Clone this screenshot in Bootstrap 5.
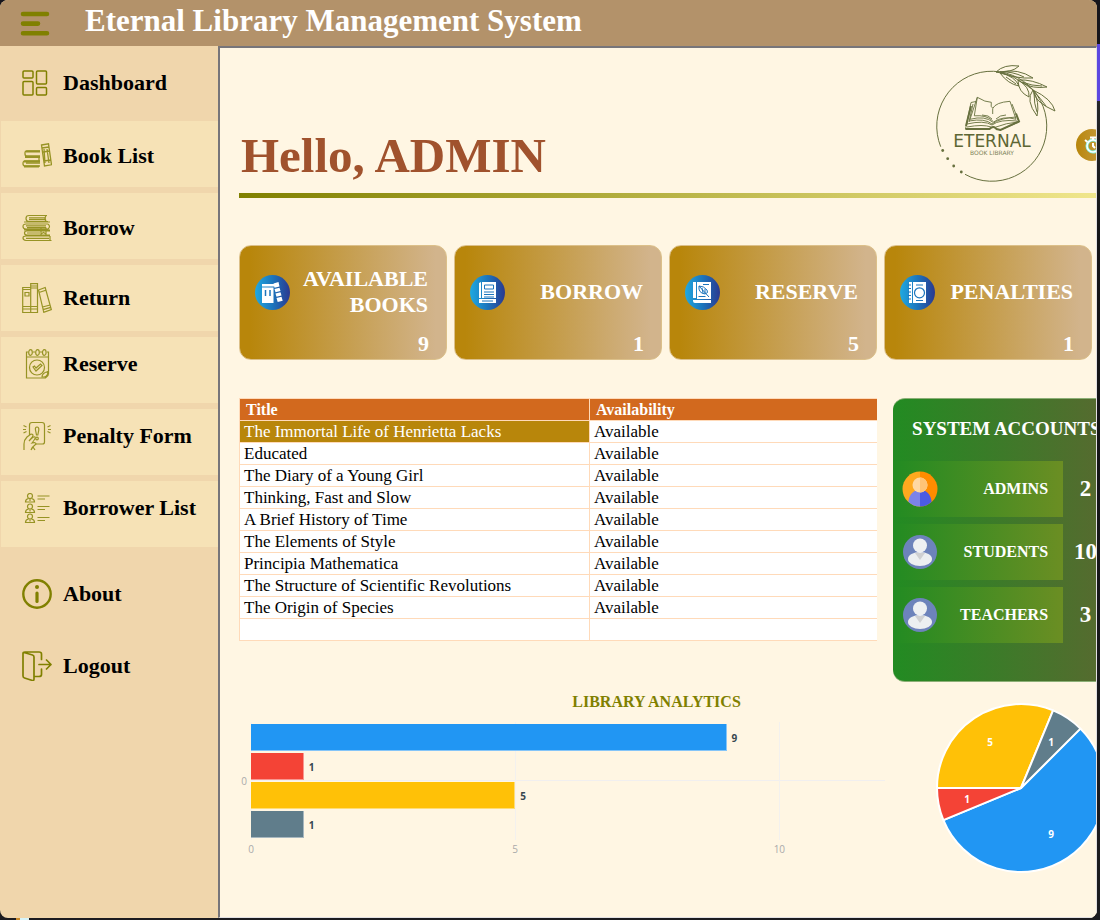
<!DOCTYPE html>
<html lang="en">
<head>
<meta charset="utf-8">
<meta name="viewport" content="width=device-width, initial-scale=1">
<title>Eternal Library Management System</title>
<link href="https://cdn.jsdelivr.net/npm/bootstrap@5.3.0/dist/css/bootstrap.min.css" rel="stylesheet">
<style>
  body {
    font-family: "Liberation Serif", serif;
    font-weight: 700;
    color: #000;
    padding: 0 3px 2px 0;
    background:
      linear-gradient(90deg, #c98a2c 4px, #d8f4f8 4px) 16px 100% / 13px 2px no-repeat,
      linear-gradient(#16151c 44px, #5c47e0 44px, #5c47e0 101px, #25262a 101px, #141416 240px, #1c1c20);
  }
  .app-shell { min-height: calc(100vh - 2px); border-radius: 8px; overflow: hidden; background: #f0d6ac; }
  .app-bar { height: 46px; background: #b3926a; color: #fff; padding-left: 20px; gap: 34px; }
  .app-bar h1 { font-size: 31px; line-height: 40px; font-weight: 700; }
  .menu-btn { width: 31px; height: 28px; padding: 0; border: 0; background: none; }
  .side-menu { width: 218px; flex: none; padding-left: 1px; }
  .side-link { display: flex; align-items: center; gap: 11px; height: 66px; margin-bottom: 6px; padding-left: 21px; font-size: 22px; line-height: 28px; color: #000; text-decoration: none; background: #f6e2b6; }
  .side-link svg { width: 30px; height: 30px; flex: none; fill: none; stroke: #808000; }
  .side-link:not(.side-plain) svg { opacity: .8; }
  .side-link.side-low { padding-bottom: 12px; }
  .side-link.side-plain { background: none; }
  .side-first { height: 75px; margin-bottom: 0; padding-bottom: 2px; }
  .side-gap { margin-top: 14px; }
  .main-pane { min-width: 0; overflow: hidden; background: #fff6e3; border-left: 2px solid #77757a; border-top: 2px solid #77757a; border-right: 1px solid #e2e0e2; border-bottom: 1px solid #e2e0e2; padding-left: 19px; }
  .greeting { height: 145px; }
  .greeting h2 { font-size: 49px; line-height: 60px; font-weight: 700; color: #a0522d; margin: 0 0 7px 2px; }
  .brand-logo { width: 120px; height: 120px; margin: 0 20px 9px 0; }
  .timer-btn { width: 32px; height: 32px; padding: 0; border: 0; border-radius: 50%; background: linear-gradient(90deg, #b8860b, #c9a04a); margin: 0 -12px 32px 0; }
  .rule-line { height: 5px; background: linear-gradient(90deg, #808000, #f0e68c); }
  .stat-grid { display: grid; grid-template-columns: repeat(4, minmax(0, 1fr)); gap: 7px; margin: 47px 4px 38px 0; }
  .stat-tile { height: 115px; border-radius: 12px; border: 1px solid #dcc08a; background: linear-gradient(90deg, #b8860b 5%, #d2b48c 95%); color: #fff; padding: 16px 18px 1px 15px; }
  .stat-tile svg { width: 35px; height: 35px; flex: none; }
  .stat-name { height: 60px; font-size: 22px; line-height: 26px; }
  .stat-count { font-size: 22px; line-height: 26px; margin: 9px -1px 0 0; }
  .book-table { border-collapse: collapse; border-color: #ffdab9; width: 100%; table-layout: fixed; background: #fff; font-weight: 400; font-size: 17px; line-height: 21px; }
  .book-table th { background: #d2691e; color: #fff; font-size: 16px; padding: 0 6px; }
  .book-table td { padding: 0 4px; height: 22px; }
  .book-table th, .book-table td { border: 1px solid #ffdab9; border-right: 0; }
  .book-table th:first-child { width: 350px; }
  .book-table .picked { background: #b8860b; color: #fff; }
  .side-col { flex: 0 0 228px; margin-right: -25px; }
  .accounts { height: 284px; border-radius: 12px; border: 1px solid #8caf76; border-left: 0; background: linear-gradient(90deg, #228b22, #556b2f 90%); color: #fff; }
  .accounts h3 { font-size: 19px; line-height: 24px; font-weight: 700; margin: 18px 0 20px 19px; white-space: nowrap; }
  .account-row { height: 56px; margin-bottom: 7px; }
  .account-name { width: 170px; background: linear-gradient(90deg, #228b22, #6b8e23); font-size: 16px; padding: 0 15px 0 9px; }
  .account-name svg { width: 36px; height: 36px; }
  .account-count { width: 45px; font-size: 23px; text-align: center; }
  .analytics-title { font-size: 16px; line-height: 24px; font-weight: 700; color: #808000; margin: 8px 22px 8px 0; text-align: center; }
  .chart-font { font-family: "Open Sans", sans-serif; font-size: 10px; line-height: 14px; }
  .y-tick { width: 8px; color: #aaa; font-weight: 400; margin-right: 4px; }
  .plot { position: relative; height: 118px; padding-top: 2px; flex: 1; min-width: 0; }
  .plot-grid { position: absolute; inset: 0; background: linear-gradient(#f1efef, #f1efef) 0 58px / 100% 1px no-repeat; }
  .plot-grid i { position: absolute; top: 0; bottom: 0; width: 1px; background: #f3f1ee; }
  .plot-bars { position: relative; display: flex; flex-direction: column; gap: 2px; }
  .bar-line { display: flex; align-items: center; gap: 5px; height: 27px; color: #37474f; }
  .bar-fill { height: 27px; flex: none; border: 1px solid rgba(255,255,255,.45); border-top: 0; border-left: 0; }
  .x-axis { position: relative; height: 14px; margin: 2px 0 0 12px; color: #aaa; font-weight: 400; }
  .x-axis span { position: absolute; transform: translateX(-50%); }
  .pie-chart { width: 172px; height: 172px; margin: -20px 0 0 42px; display: block; }
</style>
<script src="https://cdn.jsdelivr.net/npm/bootstrap@5.3.0/dist/js/bootstrap.bundle.min.js"></script>
</head>
<body>
<div class="app-shell d-flex flex-column">
  <header class="app-bar d-flex align-items-center">
    <button class="menu-btn" type="button" aria-label="Toggle menu">
      <svg class="d-block" width="31" height="28" viewBox="0 0 31 28" stroke="#808000" stroke-width="4.6" stroke-linecap="round"><path d="M3 5h24M3 14.6h15M3 24.300h24"/></svg>
    </button>
    <h1 class="m-0 pb-1 text-nowrap">Eternal Library Management System</h1>
  </header>

  <div class="d-flex flex-grow-1">
    <nav class="side-menu" aria-label="Main">
      <a class="side-link side-plain side-first" href="#"><svg viewBox="0 0 30 30" stroke-width="1.5"><rect x="1" y="3" width="10" height="7" rx="1"/><rect x="14.500" y="3" width="10" height="13" rx="1"/><rect x="1" y="13.500" width="10" height="13.500" rx="1"/><rect x="14.500" y="19.500" width="10" height="7.500" rx="1"/></svg>Dashboard</a>
      <a class="side-link pt-1" href="#"><svg viewBox="0 0 30 30" stroke-width="1.300"><path d="M18 10H5q-2 0-2 1.500v1.500q0 2 2 2h13M4 15h13v5H3M18 20H3q-2 0-2 2.500T3 25h15M4 22h14"/><path stroke-width="2.200" d="M3 16h15M2 20.500h16M2 25.500h15M4 10.500h14"/><path d="M19.500 4l7-1.200 3 21-7 1.200zM20 7l7-1M21 11l7-1M22 20l7-1M22 8l1 14M25 8l2 14"/></svg>Book List</a>
      <a class="side-link pt-1" href="#"><svg viewBox="0 0 30 30" stroke-width="1.200"><path d="M25 2.500H7Q4 2.500 4 5.500T7 8.500h19M24 2.500q-2 3 0 6M7 4.800h16M7 6.700h16M2 9h26M26 11H4q-3 0-3 2.500T4 16h22q3-2.500 0-5M4 12.800h20M5 14.600h19M2 17h26M28 18H5q-2.500 0-2.500 2T5 22h23M5 20h13M28 23H4q-3 0-3 2t3 2.500h25.500M28 23v4M4 25.300h23M19 14.500v6.500l2.500-1.500L24 21v-6.500"/></svg>Borrow</a>
      <a class="side-link" href="#"><svg viewBox="0 0 30 30" stroke-width="1.200"><path d="M.7 4.500h8v25h-8zM8.700.700h6.800v28.800H8.700zM.7 6.500h8M.7 23.500h8M.7 26h8M3 9.500h4V13H3zM8.700 3h6.800M8.700 5h6.800M8.700 23.500h6.800M8.700 26h6.800M16.500 7l6.700-2.500 6.100 22-7.500 2.800zM17 9.500l6.800-2.300M20.500 24l7.600-2M21 26.600l7.800-2.300"/></svg>Return</a>
      <a class="side-link side-low" href="#"><svg viewBox="0 0 30 30" stroke-width="1.200"><path d="M6 3H4.500v26H23l3.500-4V3H25M11 3h2M18 3h2M4.500 8h22M26 22v4.500L23.500 29H18"/><ellipse cx="8.500" cy="3.500" rx="1.800" ry="2.800"/><ellipse cx="15.500" cy="3.500" rx="1.800" ry="2.800"/><ellipse cx="22.300" cy="3.500" rx="1.800" ry="2.800"/><circle cx="15" cy="18.500" r="7.500"/><path d="M11 18l3 4 6-5.500-1.500-1.500-4.500 4-1.500-2zM20 28q0-4 6-5.500 0 5-4 5.500z"/></svg>Reserve</a>
      <a class="side-link side-low" href="#"><svg viewBox="0 0 30 30" stroke-width="1.200"><path d="M7.500 14V4q0-2.500 2.500-2.500h10q2.500 0 2.500 2.500v17q0 2-2 2h-7"/><path d="M15 6q-2 0-1.500 3l1 5h1.300l1-5Q17 6 15 6z"/><circle cx="15" cy="17.500" r="1.300"/><path d="M2 29v-6q0-4 3-7l4-3q3 0 1.500 3L7 20q5-5 6-4t-3 6q4-1 4 1-4 3-5 6M11 26l2 3M1.500 4.500l3 1.500M1 8.500h3M1.500 12l3-1.500M28.500 4.500l-3 1.500M29 8.500h-3M28.500 12l-3-1.500"/></svg>Penalty Form</a>
      <a class="side-link side-low" href="#"><svg viewBox="0 0 30 30" stroke-width="1.200"><g id="person"><circle cx="8" cy="3" r="2.500"/><path d="M6.500 5.500q-3 .5-3 3.500h9q0-3-3-3.500M8 6v2"/></g><use href="#person" y="10.500"/><use href="#person" y="20.500"/><path d="M15.500 3h12M15.500 6h7.500M15.500 13.500h12M15.500 16.500h7.500M15.500 24.500h12M15.500 27.500h7.500"/></svg>Borrower List</a>
      <a class="side-link side-plain side-gap" href="#"><svg viewBox="0 0 30 30"><circle cx="15" cy="15" r="13.700" stroke-width="2.400"/><path d="M15 14v8.500" stroke-width="3.200" stroke-linecap="round"/><circle cx="15" cy="8" r="2" fill="#808000" stroke="none"/></svg>About</a>
      <a class="side-link side-plain" href="#"><svg viewBox="0 0 30 30" stroke-width="1.700" stroke-linecap="round" stroke-linejoin="round"><path d="M1 2.500q0-1.500 2-1.500h14q2.500 0 2.500 2v5.500M19.500 18v5.500q0 2-2.500 2h-4.500M1 2.500v22.500q0 1.500 1.500 2l8 2.500q1.500.3 1.500-1.500V6q0-1.500-1.500-2L2 1.500M17 13.500h12M24.500 9l4.500 4.500-4.500 4.500"/></svg>Logout</a>
    </nav>

    <main class="main-pane flex-grow-1">
      <section class="greeting d-flex align-items-end">
        <h2 class="me-auto text-nowrap">Hello, ADMIN</h2>
        <svg class="brand-logo flex-shrink-0" viewBox="0 0 120 120" fill="none" stroke="#67703e" stroke-width="1" role="img" aria-label="Eternal Book Library">
          <path d="M4.700 82.700A55 55 0 1 1 29 110.300"/>
          <g fill="#67703e" stroke="none"><circle cx="6.700" cy="86.500" r="1.400"/><circle cx="11.700" cy="94.700" r="1.400"/><circle cx="17.700" cy="102" r="1.400"/><circle cx="25.300" cy="108" r="1.400"/></g>
          <path d="M60 8q14 2 22 8 9 5 15 10 8 9 13 16M60 8q8-8 23-6-7 7-23 6M64 8q18-4 33 6-18 1-33-6M64 9q8 11 19 13-4-10-19-13M82 16q14-1 29 7-15 2-24-4M82 16q0 12 11 17 1-10-11-17M97 26q1 12 22 21-3-12-22-21M97 26q-8 10 4 26 3-14-4-26M64 8q12-1 24 5M86 18q10 4 20 4M98 29q0 11 3 19M70 13q6 4 10 7"/>
          <path stroke-width=".9" d="M35 38.500L29.500 65h24q4-4 7 0l4 1 18.500-8L76 40M35 38.500l5-1M41.300 33.300q8 5 14 5-1 5 1.500 6 3-6 17.200-7l6 18q-13-4-23 3-8-7-23-3zM41.300 33.300l-3 18.500q12-1 18.400 5M56.700 44.500V50M31 60q17-4 25 1 8-6 25-4M31 63q16-3 24 0M60 63q10-4 22-5M33 57q16-3 23 3 8-6 24-7M37 40l-4 18M46 51q7 0 10 4M60 55q4-4 10-4"/>
          <path stroke-width="2" d="M29.500 65h24q4-4 7 0l4 1 18.500-8.500-3-8M35 42l-5 20"/>
          <g fill="#5d6634" stroke="none" text-anchor="middle" font-family="DejaVu Sans, sans-serif" font-weight="400"><text x="56" y="83" font-size="17">ETERNAL</text><text x="56" y="91" font-size="6" opacity=".8">BOOK LIBRARY</text></g>
        </svg>
        <button class="timer-btn flex-shrink-0" type="button" aria-label="Timer"><svg class="d-block" viewBox="0 0 32 32" fill="none"><circle cx="17" cy="17" r="6" stroke="#7ff0e0" stroke-width="3"/><circle cx="17" cy="17" r="6" stroke="#fff" stroke-width="1.500"/><path d="M14 8.500h8M17 8v3M9 11l2.500 2M17 14v3l2 2" stroke="#fff" stroke-width="2"/></svg></button>
      </section>
      <div class="rule-line"></div>

      <section class="stat-grid">
        <div class="stat-tile"><div class="stat-name d-flex align-items-center justify-content-between text-end">
          <svg viewBox="0 0 35 35"><defs><linearGradient id="disc"><stop offset="0" stop-color="#1fa9e1"/><stop offset=".5" stop-color="#1c75bc"/><stop offset="1" stop-color="#2b3990"/></linearGradient></defs><circle cx="17.500" cy="17.500" r="17.500" fill="url(#disc)"/><path fill="#fff" d="M7 9h13v2.500H7zM7 12.500h11.500V28H7zM18.500 8.500l5-1.500 1 4.500-5 1.200zM19.500 14l5-1.200 1 3.300-5 1.200zM20.500 18.500l5-1.200 1 3.300-5 1.200zM21.500 23l5-1.200 1.200 4-5 1.200z"/><path d="M10.500 15v6M15 15v6" stroke="#1c75bc" stroke-width="1.500"/></svg>
          <span>AVAILABLE<br>BOOKS</span></div><div class="stat-count text-end">9</div></div>
        <div class="stat-tile"><div class="stat-name d-flex align-items-center justify-content-between text-end">
          <svg viewBox="0 0 35 35"><circle cx="17.500" cy="17.500" r="17.500" fill="url(#disc)"/><path fill="#fff" d="M9 8l2-1v16H9zM12 7h14v16H12zM9 24h17v4H9z"/><path fill="none" stroke="#1c75bc" d="M14.500 10h9v4h-9zM14 17h10M14 19.500h10M14 22h10M12 26h11"/></svg>
          <span>BORROW</span></div><div class="stat-count text-end">1</div></div>
        <div class="stat-tile"><div class="stat-name d-flex align-items-center justify-content-between text-end">
          <svg viewBox="0 0 35 35"><circle cx="17.500" cy="17.500" r="17.500" fill="url(#disc)"/><path fill="#fff" d="M8 7h3v16H8zM12 7h14v17H12zM8 25h18v3H10q-2 0-2-2z"/><path fill="none" stroke="#1c75bc" d="M14 11q-1 7 6 8 4-1 2-4-3-4-8-4l10 11M18 9.500h6M13.500 21.500h7M17 13l1 5M20 14v5"/></svg>
          <span>RESERVE</span></div><div class="stat-count text-end">5</div></div>
        <div class="stat-tile"><div class="stat-name d-flex align-items-center justify-content-between text-end">
          <svg viewBox="0 0 35 35"><circle cx="17.500" cy="17.500" r="17.500" fill="url(#disc)"/><path fill="#fff" d="M9 7h3v21H9zM13 7h13v21H13z"/><path stroke="#1c75bc" stroke-width="1.200" d="M8 10h3M8 13.500h3M8 17h3M8 20.500h3M8 24h3M16 10h7M16 25.500h7"/><circle cx="19.500" cy="17.800" r="5" fill="none" stroke="#1c75bc" stroke-width="1.200"/></svg>
          <span>PENALTIES</span></div><div class="stat-count text-end">1</div></div>
      </section>

      <section class="d-flex align-items-start">
        <div class="flex-grow-1" style="min-width:0">
          <table class="book-table">
            <thead><tr><th scope="col">Title</th><th scope="col">Availability</th></tr></thead>
            <tbody>
              <tr><td class="picked">The Immortal Life of Henrietta Lacks</td><td>Available</td></tr>
              <tr><td>Educated</td><td>Available</td></tr>
              <tr><td>The Diary of a Young Girl</td><td>Available</td></tr>
              <tr><td>Thinking, Fast and Slow</td><td>Available</td></tr>
              <tr><td>A Brief History of Time</td><td>Available</td></tr>
              <tr><td>The Elements of Style</td><td>Available</td></tr>
              <tr><td>Principia Mathematica</td><td>Available</td></tr>
              <tr><td>The Structure of Scientific Revolutions</td><td>Available</td></tr>
              <tr><td>The Origin of Species</td><td>Available</td></tr>
              <tr><td></td><td></td></tr>
            </tbody>
          </table>
        </div>
        <aside class="side-col ms-3">
          <div class="accounts">
            <h3>SYSTEM ACCOUNTS</h3>
            <div class="account-row d-flex align-items-center">
              <div class="account-name h-100 d-flex align-items-center justify-content-between"><svg viewBox="0 0 36 36"><clipPath id="face"><circle cx="18" cy="18" r="17.500"/></clipPath><g clip-path="url(#face)"><path fill="#ffa91f" d="M0 0h18v36H0z"/><path fill="#ff8c00" d="M18 0h18v36H18z"/><path fill="#7c83e8" d="M6 36q0-17 12-17v17z"/><path fill="#4c5be3" d="M30 36q0-17-12-17v17z"/><circle cx="18" cy="14" r="7.500" fill="#ffd8a3"/><path fill="#ffc477" d="M18 6.500a7.500 7.500 0 0 1 0 15z"/></g></svg><span>ADMINS</span></div>
              <div class="account-count">2</div>
            </div>
            <div class="account-row d-flex align-items-center">
              <div class="account-name h-100 d-flex align-items-center justify-content-between"><svg viewBox="0 0 36 36"><g id="member"><circle cx="18" cy="18" r="17" fill="#6d83bb"/><ellipse cx="18" cy="25" rx="12" ry="7" fill="#eceff1"/><path fill="#cfd0d2" d="M13 19h10l-5 7z"/><circle cx="18" cy="11.500" r="7" fill="#eef0f2"/></g></svg><span>STUDENTS</span></div>
              <div class="account-count">10</div>
            </div>
            <div class="account-row d-flex align-items-center">
              <div class="account-name h-100 d-flex align-items-center justify-content-between"><svg viewBox="0 0 36 36"><use href="#member"/></svg><span>TEACHERS</span></div>
              <div class="account-count">3</div>
            </div>
          </div>
        </aside>
      </section>

      <h3 class="analytics-title">LIBRARY ANALYTICS</h3>
      <section class="d-flex align-items-start">
        <div class="chart-font flex-grow-1" style="min-width:0">
          <div class="d-flex align-items-center">
            <span class="y-tick text-end">0</span>
            <div class="plot">
              <div class="plot-grid"><i style="left:0"></i><i style="left:41.67%"></i><i style="left:83.33%"></i></div>
              <div class="plot-bars">
                <div class="bar-line"><div class="bar-fill" style="width:75%;background-color:#2196f3"></div>9</div>
                <div class="bar-line"><div class="bar-fill" style="width:8.33%;background-color:#f44336"></div>1</div>
                <div class="bar-line"><div class="bar-fill" style="width:41.67%;background-color:#ffc107"></div>5</div>
                <div class="bar-line"><div class="bar-fill" style="width:8.33%;background-color:#607d8b"></div>1</div>
              </div>
            </div>
          </div>
          <div class="x-axis"><span style="left:0">0</span><span style="left:41.67%">5</span><span style="left:83.33%">10</span></div>
        </div>
        <div class="side-col ms-2">
          <svg class="pie-chart" viewBox="0 0 172 172" role="img" aria-label="Library analytics pie chart">
            <g stroke="#fff" stroke-width="2" stroke-linejoin="round">
              <path fill="#2196f3" d="M86 86L145.400 26.600A84 84 0 1 1 8.400 118.100z"/>
              <path fill="#f44336" d="M86 86L8.400 118.100A84 84 0 0 1 2 86z"/>
              <path fill="#ffc107" d="M86 86L2 86A84 84 0 0 1 118.100 8.400z"/>
              <path fill="#607d8b" d="M86 86L118.100 8.400A84 84 0 0 1 145.400 26.600z"/>
            </g>
            <g class="chart-font" fill="#fff" text-anchor="middle"><text x="116" y="136">9</text><text x="32" y="101">1</text><text x="55" y="44">5</text><text x="116" y="44">1</text></g>
          </svg>
        </div>
      </section>
    </main>
  </div>
</div>
</body>
</html>
